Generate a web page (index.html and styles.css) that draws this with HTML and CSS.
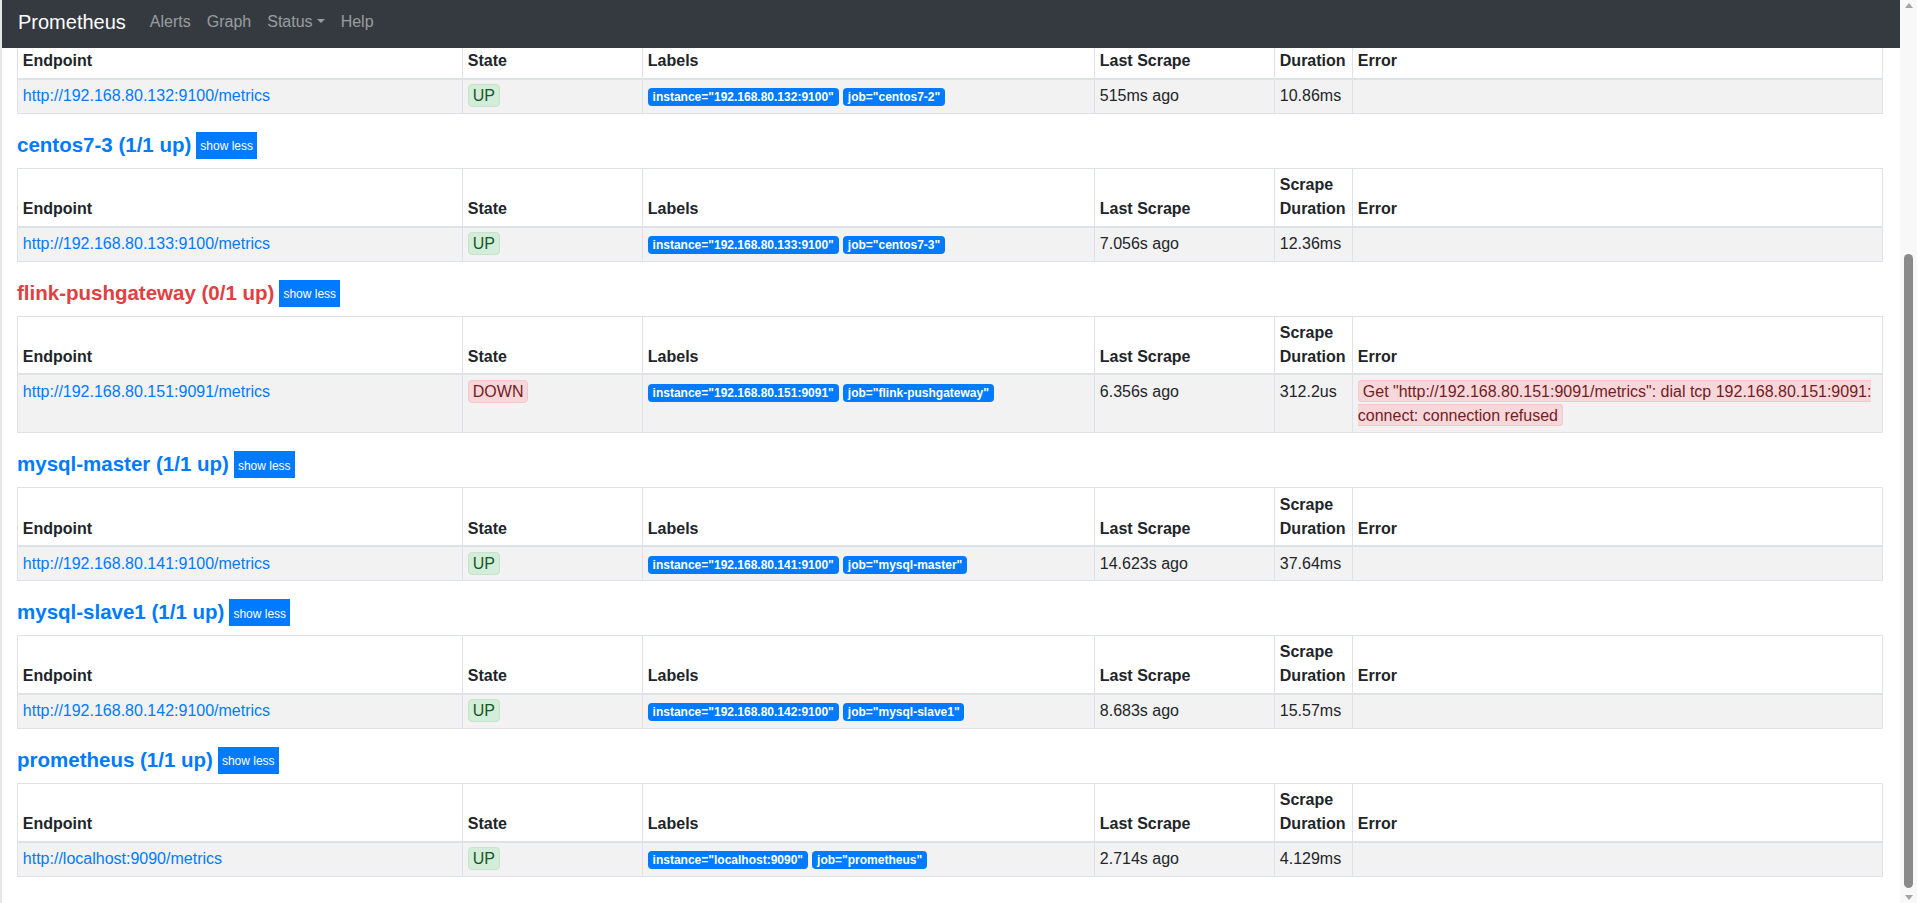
FILE: index.html
```html
<!DOCTYPE html>
<html lang="en">
<head>
    <meta charset="UTF-8">
    <meta name="viewport" content="width=device-width, initial-scale=1.0">
    <title>Prometheus Time Series Collection and Processing Server</title>
    <link rel="stylesheet" href="styles.css">
</head>
<body>

    <div class="page">
        <nav class="navbar">
            <a class="brand" href="#">Prometheus</a>
            <ul class="nav-links">
                <li><a href="#">Alerts</a></li>
                <li><a href="#">Graph</a></li>
                <li><a href="#" class="dropdown-toggle">Status</a></li>
                <li><a href="#">Help</a></li>
            </ul>
        </nav>

        <div class="viewport">
            <div class="targets">

                <!-- centos7-2 -->
                <h2 class="job-header"><a href="#job-centos7-2">centos7-2 (1/1 up)</a> <button class="btn-xs">show less</button></h2>
                <table class="table">
                    <thead>
                        <tr>
                            <th class="col-endpoint">Endpoint</th>
                            <th class="col-state">State</th>
                            <th class="col-labels">Labels</th>
                            <th class="col-last">Last Scrape</th>
                            <th class="col-duration">Scrape Duration</th>
                            <th>Error</th>
                        </tr>
                    </thead>
                    <tbody>
                        <tr>
                            <td><a href="#">http://192.168.80.132:9100/metrics</a></td>
                            <td><span class="state state-up">UP</span></td>
                            <td><span class="badge">instance="192.168.80.132:9100"</span> <span class="badge">job="centos7-2"</span></td>
                            <td>515ms ago</td>
                            <td>10.86ms</td>
                            <td class="error"></td>
                        </tr>
                    </tbody>
                </table>

                <!-- centos7-3 -->
                <h2 class="job-header"><a href="#job-centos7-3">centos7-3 (1/1 up)</a> <button class="btn-xs">show less</button></h2>
                <table class="table">
                    <thead>
                        <tr>
                            <th class="col-endpoint">Endpoint</th>
                            <th class="col-state">State</th>
                            <th class="col-labels">Labels</th>
                            <th class="col-last">Last Scrape</th>
                            <th class="col-duration">Scrape Duration</th>
                            <th>Error</th>
                        </tr>
                    </thead>
                    <tbody>
                        <tr>
                            <td><a href="#">http://192.168.80.133:9100/metrics</a></td>
                            <td><span class="state state-up">UP</span></td>
                            <td><span class="badge">instance="192.168.80.133:9100"</span> <span class="badge">job="centos7-3"</span></td>
                            <td>7.056s ago</td>
                            <td>12.36ms</td>
                            <td class="error"></td>
                        </tr>
                    </tbody>
                </table>

                <!-- flink-pushgateway -->
                <h2 class="job-header down"><a href="#job-flink-pushgateway">flink-pushgateway (0/1 up)</a> <button class="btn-xs">show less</button></h2>
                <table class="table">
                    <thead>
                        <tr>
                            <th class="col-endpoint">Endpoint</th>
                            <th class="col-state">State</th>
                            <th class="col-labels">Labels</th>
                            <th class="col-last">Last Scrape</th>
                            <th class="col-duration">Scrape Duration</th>
                            <th>Error</th>
                        </tr>
                    </thead>
                    <tbody>
                        <tr>
                            <td><a href="#">http://192.168.80.151:9091/metrics</a></td>
                            <td><span class="state state-down">DOWN</span></td>
                            <td><span class="badge">instance="192.168.80.151:9091"</span> <span class="badge">job="flink-pushgateway"</span></td>
                            <td>6.356s ago</td>
                            <td>312.2us</td>
                            <td class="error"><span class="error-msg">Get "http://192.168.80.151:9091/metrics": dial tcp 192.168.80.151:9091: connect: connection refused</span></td>
                        </tr>
                    </tbody>
                </table>

                <!-- mysql-master -->
                <h2 class="job-header"><a href="#job-mysql-master">mysql-master (1/1 up)</a> <button class="btn-xs">show less</button></h2>
                <table class="table">
                    <thead>
                        <tr>
                            <th class="col-endpoint">Endpoint</th>
                            <th class="col-state">State</th>
                            <th class="col-labels">Labels</th>
                            <th class="col-last">Last Scrape</th>
                            <th class="col-duration">Scrape Duration</th>
                            <th>Error</th>
                        </tr>
                    </thead>
                    <tbody>
                        <tr>
                            <td><a href="#">http://192.168.80.141:9100/metrics</a></td>
                            <td><span class="state state-up">UP</span></td>
                            <td><span class="badge">instance="192.168.80.141:9100"</span> <span class="badge">job="mysql-master"</span></td>
                            <td>14.623s ago</td>
                            <td>37.64ms</td>
                            <td class="error"></td>
                        </tr>
                    </tbody>
                </table>

                <!-- mysql-slave1 -->
                <h2 class="job-header"><a href="#job-mysql-slave1">mysql-slave1 (1/1 up)</a> <button class="btn-xs">show less</button></h2>
                <table class="table">
                    <thead>
                        <tr>
                            <th class="col-endpoint">Endpoint</th>
                            <th class="col-state">State</th>
                            <th class="col-labels">Labels</th>
                            <th class="col-last">Last Scrape</th>
                            <th class="col-duration">Scrape Duration</th>
                            <th>Error</th>
                        </tr>
                    </thead>
                    <tbody>
                        <tr>
                            <td><a href="#">http://192.168.80.142:9100/metrics</a></td>
                            <td><span class="state state-up">UP</span></td>
                            <td><span class="badge">instance="192.168.80.142:9100"</span> <span class="badge">job="mysql-slave1"</span></td>
                            <td>8.683s ago</td>
                            <td>15.57ms</td>
                            <td class="error"></td>
                        </tr>
                    </tbody>
                </table>

                <!-- prometheus -->
                <h2 class="job-header"><a href="#job-prometheus">prometheus (1/1 up)</a> <button class="btn-xs">show less</button></h2>
                <table class="table">
                    <thead>
                        <tr>
                            <th class="col-endpoint">Endpoint</th>
                            <th class="col-state">State</th>
                            <th class="col-labels">Labels</th>
                            <th class="col-last">Last Scrape</th>
                            <th class="col-duration">Scrape Duration</th>
                            <th>Error</th>
                        </tr>
                    </thead>
                    <tbody>
                        <tr>
                            <td><a href="#">http://localhost:9090/metrics</a></td>
                            <td><span class="state state-up">UP</span></td>
                            <td><span class="badge">instance="localhost:9090"</span> <span class="badge">job="prometheus"</span></td>
                            <td>2.714s ago</td>
                            <td>4.129ms</td>
                            <td class="error"></td>
                        </tr>
                    </tbody>
                </table>

            </div>
        </div>
    </div>

    <!-- barra de rolagem -->
    <div class="scrollbar">
        <span class="arrow arrow-up"></span>
        <div class="track"><div class="thumb"></div></div>
        <span class="arrow arrow-down"></span>
    </div>

    <script>
        // page is shown scrolled down a bit
        document.querySelector('.viewport').scrollTop = 82;
    </script>

</body>
</html>
```

FILE: styles.css
```css
*, *::before, *::after {
    box-sizing: border-box;
}
body {
    font-family: 'Liberation Sans', Arial, sans-serif;
    font-size: 16px;
    line-height: 1.5;
    color: #212529;
    background-color: #fff;
    margin: 0;
    height: 100vh;
    overflow: hidden;
    display: flex;
    border-left: 2px solid #e6e6e6;
}
.page {
    flex: 1;
    min-width: 0;
    display: flex;
    flex-direction: column;
}
.navbar {
    flex: none;
    height: 48px;
    padding: 0 16px 4px;
    background-color: #343a40;
    display: flex;
    align-items: center;
}
.brand {
    color: #fff;
    font-size: 20px;
    margin-right: 16px;
    text-decoration: none;
}
.nav-links {
    display: flex;
    list-style: none;
    margin: 0;
    padding: 0;
}
.nav-links a {
    display: block;
    padding: 0 8px;
    color: rgba(255,255,255,0.5);
    text-decoration: none;
}
.dropdown-toggle::after {
    content: "";
    display: inline-block;
    margin-left: 0.255em;
    vertical-align: 0.255em;
    border-top: 0.3em solid;
    border-right: 0.3em solid transparent;
    border-left: 0.3em solid transparent;
}
.viewport {
    flex: 1;
    overflow: hidden;
}
.targets {
    padding: 0 17px 60px 15px;
}
.job-header {
    display: flex;
    align-items: center;
    gap: 5px;
    margin: 18px 0 9px;
    font-size: 20.5px;
    font-weight: 700;
    line-height: 1.2;
}
.job-header a {
    color: #007bff;
    text-decoration: none;
}
.job-header.down a {
    color: #e0403f;
}
.btn-xs {
    height: 27px;
    padding: 2px 4px 0;
    border: none;
    border-radius: 0;
    background-color: #007bff;
    color: #fff;
    font-family: 'Liberation Sans', Arial, sans-serif;
    font-size: 12px;
}
.table {
    width: 100%;
    border-collapse: collapse;
    table-layout: fixed;
    border: 1px solid #dee2e6;
}
th, td {
    padding: 4.45px 4.8px;
    border: 1px solid #dee2e6;
    text-align: left;
    vertical-align: top;
}
thead th {
    vertical-align: bottom;
    border-bottom-width: 2px;
}
tbody tr {
    background-color: #f2f2f2;
}
.col-endpoint { width: 445px; }
.col-state { width: 180px; }
.col-labels { width: 452px; }
.col-last { width: 180px; }
.col-duration { width: 78px; }
td a {
    color: #007bff;
    text-decoration: none;
}
.state {
    display: inline-block;
    padding: 0 4px;
    line-height: 21px;
    border: 1px solid;
    border-radius: 4px;
}
.state-up {
    background-color: #d4edda;
    border-color: #c3e6cb;
    color: #155724;
}
.state-down {
    background-color: #f8d7da;
    border-color: #f5c6cb;
    color: #721c24;
}
.badge {
    display: inline-block;
    padding: 0.25em 0.4em;
    font-size: 12px;
    font-weight: 700;
    line-height: 1;
    color: #fff;
    background-color: #007bff;
    border-radius: 4px;
}
.error {
    word-break: break-all;
}
.error-msg {
    padding: 2px 4px 1px;
    border: 1px solid #f5c6cb;
    border-radius: 4px;
    background-color: #f8d7da;
    color: #721c24;
}
.scrollbar {
    flex: none;
    width: 17px;
    background-color: #f8f8f8;
    display: flex;
    flex-direction: column;
    align-items: center;
}
.arrow {
    width: 0;
    height: 0;
    margin: 3px 0;
    border-left: 4px solid transparent;
    border-right: 4px solid transparent;
}
.arrow-up {
    border-bottom: 5px solid #a3a3a3;
}
.arrow-down {
    border-top: 5px solid #a3a3a3;
}
.track {
    flex: 1;
    width: 100%;
    display: flex;
    justify-content: center;
}
.thumb {
    width: 9px;
    height: 634px;
    margin-top: 243px;
    background-color: #8a8a8a;
    border-radius: 5px;
}
```
